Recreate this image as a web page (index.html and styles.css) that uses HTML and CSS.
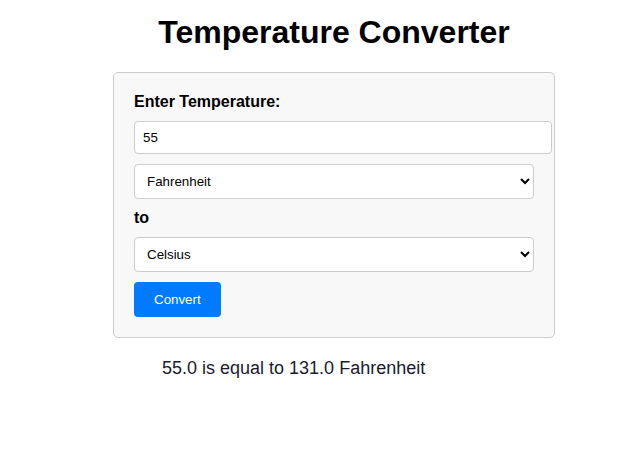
FILE: index.html
```html
<!DOCTYPE html>
<html>
<head>
<meta charset="utf-8">
<link rel="stylesheet" href="styles.css">
</head>
<body>
<div class="page">
  <h1 class="title">Temperature Converter</h1>
  <form class="card">
    <label class="label" for="temp">Enter Temperature:</label>
    <input class="field" id="temp" type="text" value="55">
    <select class="choice">
      <option>Fahrenheit</option>
    </select>
    <label class="label">to</label>
    <select class="choice">
      <option>Celsius</option>
    </select>
    <button class="btn" type="button">Convert</button>
  </form>
  <p class="result">55.0 is equal to 131.0 Fahrenheit</p>
</div>
</body>
</html>
```
FILE: styles.css
```css
html, body {
  margin: 0;
  padding: 0;
  background: #fff;
}
body {
  font-family: "Liberation Sans", Arial, sans-serif;
}
.page {
  width: 442px;
  margin-left: 113px;
}
.title {
  font-size: 32px;
  font-weight: bold;
  text-align: center;
  margin: 14px -40px 21px;
  color: #000;
}
.card {
  box-sizing: border-box;
  width: 442px;
  background: #f8f8f8;
  border: 1px solid #ccc;
  border-radius: 5px;
  padding: 20px;
  display: flex;
  flex-direction: column;
  align-items: flex-start;
}
.label {
  display: block;
  font-size: 16px;
  font-weight: bold;
  margin-bottom: 10px;
  color: #000;
}
.field {
  width: 100%;
  padding: 8px;
  border: 1px solid #ccc;
  border-radius: 4px;
  font-family: "Liberation Sans", Arial, sans-serif;
  font-size: 13.333px;
  margin: 0 0 10px;
  background: #fff;
}
.choice {
  width: 100%;
  padding: 8px;
  border: 1px solid #ccc;
  border-radius: 4px;
  font-family: "Liberation Sans", Arial, sans-serif;
  font-size: 13.333px;
  margin: 0 0 10px;
  background: #fff;
  color: #000;
}
.btn {
  padding: 10px 20px;
  background: #007bff;
  color: #fff;
  border: none;
  border-radius: 4px;
  font-family: "Liberation Sans", Arial, sans-serif;
  font-size: 13.333px;
}
.result {
  font-size: 18px;
  margin: 20px 0 0;
  padding-left: 49px;
  color: #1a1a2e;
}
```
